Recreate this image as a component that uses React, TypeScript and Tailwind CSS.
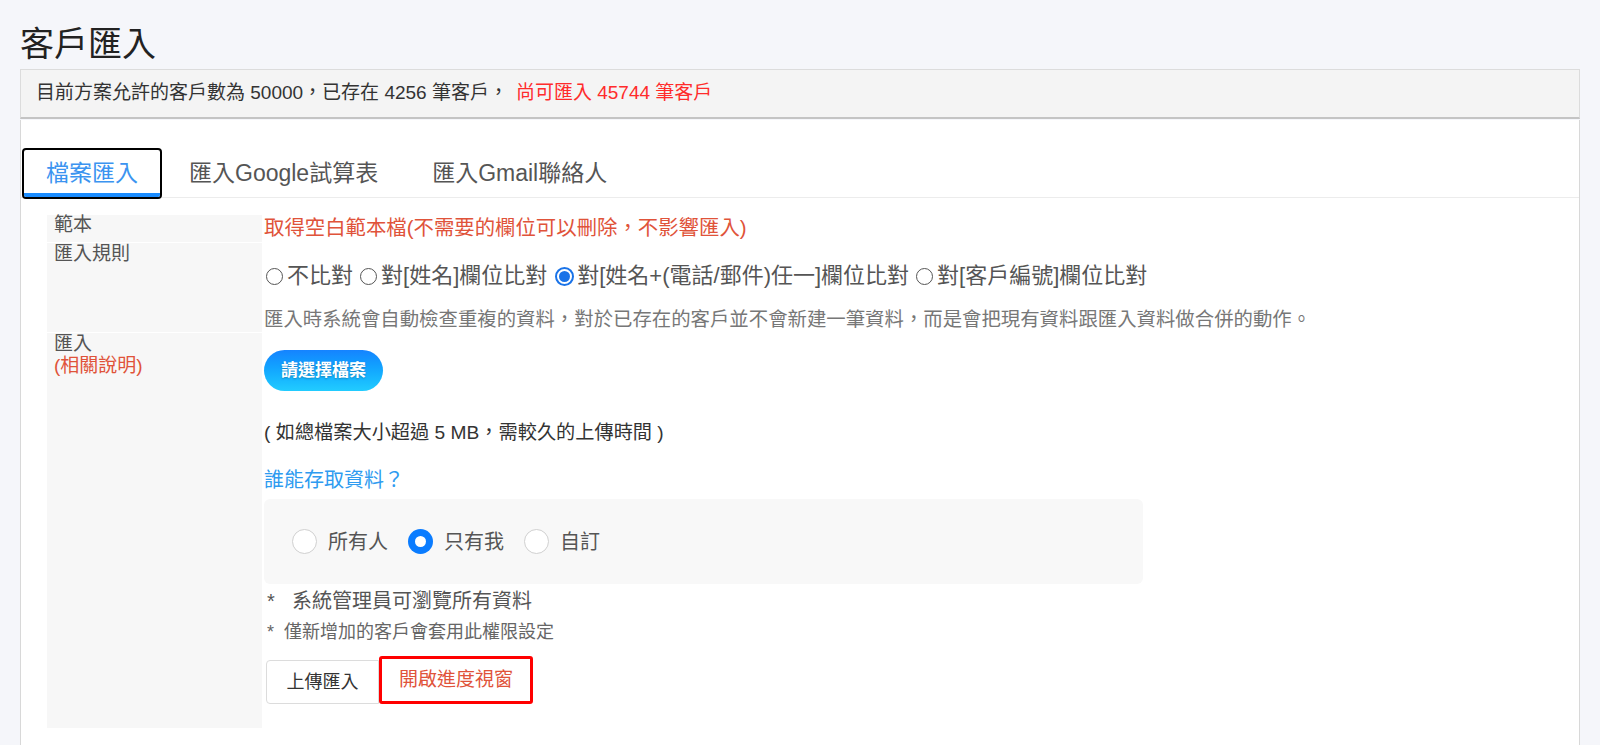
import { useState } from "react";

const FONT = 'font-["Liberation_Sans","Noto_Sans_CJK_TC",sans-serif]';

const tabs = ["檔案匯入", "匯入Google試算表", "匯入Gmail聯絡人"];

const rules = [
  "不比對",
  "對[姓名]欄位比對",
  "對[姓名+(電話/郵件)任一]欄位比對",
  "對[客戶編號]欄位比對",
];

const access = ["所有人", "只有我", "自訂"];

function SmallRadio({ checked }: { checked: boolean }) {
  if (checked) {
    return (
      <span className="ml-[3px] mr-[3px] flex h-[19px] w-[19px] shrink-0 items-center justify-center rounded-full border-2 border-[#1a73e8] bg-white">
        <span className="h-[11px] w-[11px] rounded-full bg-[#1a73e8]" />
      </span>
    );
  }
  return <span className="ml-[2px] mr-[4px] h-[17px] w-[17px] shrink-0 rounded-full border-[1.5px] border-[#555]" />;
}

function BigRadio({ checked }: { checked: boolean }) {
  if (checked) {
    return (
      <span className="flex h-[25px] w-[25px] shrink-0 items-center justify-center rounded-full bg-[#0a7cff]">
        <span className="h-[11px] w-[11px] rounded-full bg-white" />
      </span>
    );
  }
  return <span className="h-[25px] w-[25px] shrink-0 rounded-full border-[1.5px] border-[#d0d0d0] bg-white" />;
}

export default function App() {
  const [tab, setTab] = useState(0);
  const [rule, setRule] = useState(2);
  const [who, setWho] = useState(1);

  return (
    <div className={`min-h-screen bg-[#f5f6fa] px-5 text-[#333] ${FONT}`}>
      <h1 className="pt-[25px] text-[34px] leading-[38px] text-[#222]">客戶匯入</h1>

      <div className="mt-[6px] flex h-[50px] items-center border border-b-2 border-[#dcdcdc] border-b-[#c4c4c4] bg-[#f4f4f4] pl-[15px] text-[19px] text-[#333]">
        <span>目前方案允許的客戶數為 50000，已存在 4256 筆客戶，</span>
        <span className="ml-[8px] text-[#ff2b2b]">尚可匯入 45744 筆客戶</span>
      </div>

      <div className="mt-px border-x border-[#d8d8d8] bg-white pb-[30px]">
        <div className="flex border-b border-[#ececec] pt-[28px] pl-px">
          {tabs.map((t, i) => (
            <button
              key={t}
              onClick={() => setTab(i)}
              className={
                i === tab
                  ? "relative -mb-[2px] h-[51px] overflow-hidden rounded-[4px] border-2 border-black px-[22px] text-[23px] text-[#3b94f0]"
                  : "-mb-[2px] h-[51px] px-[27px] text-[23px] text-[#555]"
              }
            >
              {t}
              {i === tab && <span className="absolute inset-x-0 bottom-0 h-[4px] bg-[#1a8cff]" />}
            </button>
          ))}
        </div>

        <div className="grid grid-cols-[215px_1fr] gap-x-[2px] gap-y-[1px] px-[26px] pt-[17px]">
          <div className="bg-[#f7f7f7] pl-[7px] text-[19px] leading-[20px] text-[#555]">範本</div>
          <div className="text-[20.4px] leading-[27px] text-[#e0533a]">取得空白範本檔(不需要的欄位可以刪除，不影響匯入)</div>

          <div className="bg-[#f7f7f7] pl-[7px] text-[19px] leading-[22px] text-[#555]">匯入規則</div>
          <div className="pt-[20px]">
            <div className="flex items-center text-[22px] leading-[26px] text-[#555]">
              {rules.map((r, i) => (
                <label key={r} onClick={() => setRule(i)} className="mr-[5px] flex cursor-pointer items-center">
                  <SmallRadio checked={i === rule} />
                  {r}
                </label>
              ))}
            </div>
            <p className="mt-[17px] text-[19.4px] leading-[26px] text-[#777]">
              匯入時系統會自動檢查重複的資料，對於已存在的客戶並不會新建一筆資料，而是會把現有資料跟匯入資料做合併的動作。
            </p>
          </div>

          <div className="bg-[#f7f7f7] pl-[7px] text-[19px] leading-[22px] text-[#555]">
            匯入
            <br />
            <span className="text-[#e0533a]">(相關說明)</span>
          </div>
          <div className="pb-[24px]">
            <button className="mt-[17px] h-[41px] w-[119px] rounded-full bg-gradient-to-b from-[#1683ff] to-[#22ccff] text-[17px] font-bold text-white [text-shadow:0_1px_2px_rgba(0,0,0,0.25)]">
              請選擇檔案
            </button>
            <p className="mt-[29px] text-[19.2px] leading-[26px] text-[#333]">( 如總檔案大小超過 5 MB，需較久的上傳時間 )</p>
            <p className="mt-[21px] text-[20px] leading-[26px] text-[#2e9bf0]">誰能存取資料？</p>
            <div className="mt-[6px] flex h-[85px] w-[879px] items-center rounded-md bg-[#f8f8f8] pl-[28px]">
              {access.map((a, i) => (
                <label key={a} onClick={() => setWho(i)} className="mr-[20px] flex cursor-pointer items-center gap-[11px] text-[20px] text-[#555]">
                  <BigRadio checked={i === who} />
                  {a}
                </label>
              ))}
            </div>
            <p className="mt-[5px] flex pl-[3px] text-[20px] leading-[24px] text-[#555]">
              <span className="w-[25px]">*</span>
              系統管理員可瀏覽所有資料
            </p>
            <p className="mt-[7px] flex pl-[3px] text-[18px] leading-[24px] text-[#666]">
              <span className="w-[17px]">*</span>
              僅新增加的客戶會套用此權限設定
            </p>
            <div className="mt-[12px] ml-[2px] flex items-end">
              <button className="h-[44px] w-[113px] rounded-l-[4px] border border-[#dcdcdc] bg-white text-[18px] text-[#333]">
                上傳匯入
              </button>
              <button className="h-[48px] w-[154px] rounded-[3px] border-[3px] border-[#ff0000] bg-white text-[19px] text-[#e0533a]">
                開啟進度視窗
              </button>
            </div>
          </div>
        </div>
      </div>
    </div>
  );
}
